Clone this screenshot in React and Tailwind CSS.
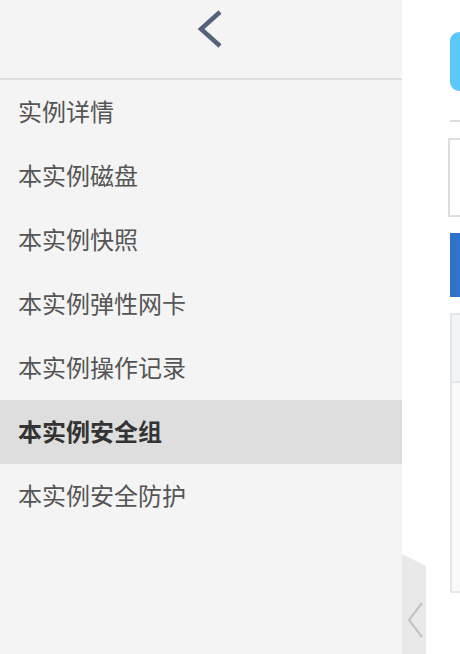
import React from 'react';

const items = [
  '实例详情',
  '本实例磁盘',
  '本实例快照',
  '本实例弹性网卡',
  '本实例操作记录',
  '本实例安全组',
  '本实例安全防护',
];

export default function App() {
  const active = 5;
  return (
    <div
      className="relative flex h-[654px] w-[460px] overflow-hidden bg-white"
      style={{ fontFamily: '"Noto Sans CJK SC", "Noto Sans", sans-serif' }}
    >
      {/* side menu */}
      <aside className="flex h-full w-[402px] shrink-0 flex-col bg-[#f4f4f4]">
        <div className="flex h-[80px] items-start border-b-2 border-[#dddddd] pl-[196px] pt-[9px]">
          <svg width="28" height="40" viewBox="0 0 28 40">
            <polyline
              points="24,3 5,20 24,37"
              fill="none"
              stroke="#54627a"
              strokeWidth="4.5"
            />
          </svg>
        </div>
        <ul>
          {items.map((label, i) => (
            <li
              key={label}
              className={
                i === active
                  ? 'flex h-16 items-center bg-[#dedede] pb-[3px] pl-[18px] text-[24px] font-bold text-[#333333]'
                  : 'flex h-16 items-center pb-[3px] pl-[18px] text-[24px] text-[#555555]'
              }
            >
              {label}
            </li>
          ))}
        </ul>
      </aside>

      {/* main content (cut off) */}
      <main className="flex flex-1 flex-col pl-[48px] pt-[32px]">
        <div className="h-[59px] rounded-l-[9px] bg-[#5cc8f9]" />
        <div className="mt-[29px] h-[2px] bg-[#dddddd]" />
        <div className="-ml-[2px] mt-[16px] h-[79px] border-y-2 border-l-2 border-[#dddddd]" />
        <div className="mt-[16px] h-[64px] bg-[#2f73c9]" />
        <div className="mt-[16px] flex h-[280px] flex-col border-2 border-r-0 border-[#e4e6eb] bg-[#f9f9f9]">
          <div className="h-[68px] border-b-2 border-[#e4e6eb] bg-[#f3f4f8]" />
        </div>
      </main>

      {/* collapse handle */}
      <div className="absolute left-[402px] top-[554px] h-[100px] w-6">
        <svg width="24" height="100" viewBox="0 0 24 100" className="block">
          <polygon points="0,0 24,12 24,100 0,100" fill="#e9e9e9" />
          <polyline
            points="20,49 7,66 20,83"
            fill="none"
            stroke="#c4c4c4"
            strokeWidth="2.2"
          />
        </svg>
      </div>
    </div>
  );
}
